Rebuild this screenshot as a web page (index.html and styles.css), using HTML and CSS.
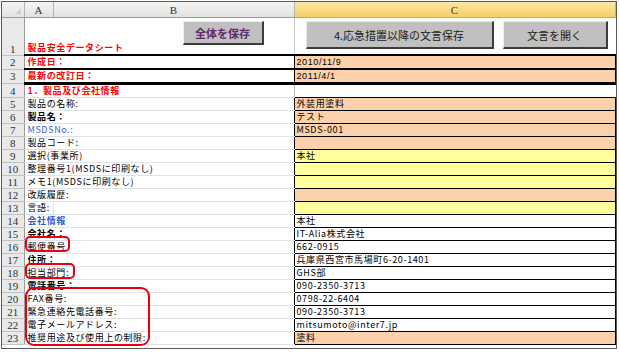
FILE: index.html
```html
<!DOCTYPE html>
<html>
<head>
    <meta charset="utf-8">
    <link rel="stylesheet" href="styles.css">
</head>
<body>
    <div class="frame">
        <table class="sheet">
            <colgroup>
                <col class="w-rn">
                <col class="w-a">
                <col class="w-b">
                <col class="w-c">
            </colgroup>
            <tr class="head">
                <th class="corner"><span class="tri"></span></th>
                <th class="colh">A</th>
                <th class="colh">B</th>
                <th class="colh sel">C</th>
            </tr>
            <tr class="r-top">
                <td class="rn rn-top">1</td>
                <td class="lbl" colspan="2">
                    <div class="top-b">
                        <span class="red">製品安全データシート</span>
                        <span class="btn btn-all">全体を保存</span>
                    </div>
                </td>
                <td class="val top-c">
                    <div class="btns">
                        <span class="btn btn-wide">4.応急措置以降の文言保存</span>
                        <span class="btn btn-open">文言を開く</span>
                    </div>
                </td>
            </tr>
            <tr class="thick">
                <td class="rn">2</td>
                <td class="lbl red" colspan="2">作成日：</td>
                <td class="val box orange small">2010/11/9</td>
            </tr>
            <tr class="thick thick-last">
                <td class="rn">3</td>
                <td class="lbl red" colspan="2">最新の改訂日：</td>
                <td class="val box orange small">2011/4/1</td>
            </tr>
            <tr>
                <td class="rn">4</td>
                <td class="lbl red" colspan="2">1．製品及び会社情報</td>
                <td class="val"></td>
            </tr>
            <tr>
                <td class="rn">5</td>
                <td class="lbl wide" colspan="2">製品の名称:</td>
                <td class="val box orange">外装用塗料</td>
            </tr>
            <tr>
                <td class="rn">6</td>
                <td class="lbl bold" colspan="2">製品名：</td>
                <td class="val box orange">テスト</td>
            </tr>
            <tr>
                <td class="rn">7</td>
                <td class="lbl blue" colspan="2">MSDSNo.:</td>
                <td class="val box orange">MSDS-001</td>
            </tr>
            <tr>
                <td class="rn">8</td>
                <td class="lbl" colspan="2">製品コード:</td>
                <td class="val box orange"></td>
            </tr>
            <tr>
                <td class="rn">9</td>
                <td class="lbl" colspan="2">選択(事業所)</td>
                <td class="val box yellow">本社</td>
            </tr>
            <tr>
                <td class="rn">10</td>
                <td class="lbl" colspan="2">整理番号1(MSDSに印刷なし)</td>
                <td class="val box yellow"></td>
            </tr>
            <tr>
                <td class="rn">11</td>
                <td class="lbl" colspan="2">メモ1(MSDSに印刷なし)</td>
                <td class="val box yellow"></td>
            </tr>
            <tr>
                <td class="rn">12</td>
                <td class="lbl" colspan="2">改版履歴:</td>
                <td class="val box orange"></td>
            </tr>
            <tr>
                <td class="rn">13</td>
                <td class="lbl-a">言語:</td>
                <td class="lbl-b"></td>
                <td class="val box yellow"></td>
            </tr>
            <tr>
                <td class="rn">14</td>
                <td class="lbl blue bold" colspan="2">会社情報</td>
                <td class="val box">本社</td>
            </tr>
            <tr>
                <td class="rn">15</td>
                <td class="lbl bold" colspan="2">会社名：</td>
                <td class="val box">IT-Alia株式会社</td>
            </tr>
            <tr>
                <td class="rn">16</td>
                <td class="lbl" colspan="2">郵便番号</td>
                <td class="val box">662-0915</td>
            </tr>
            <tr>
                <td class="rn">17</td>
                <td class="lbl bold" colspan="2">住所：</td>
                <td class="val box">兵庫県西宮市馬場町6-20-1401</td>
            </tr>
            <tr>
                <td class="rn">18</td>
                <td class="lbl" colspan="2">担当部門:</td>
                <td class="val box">GHS部</td>
            </tr>
            <tr>
                <td class="rn">19</td>
                <td class="lbl bold" colspan="2">電話番号：</td>
                <td class="val box">090-2350-3713</td>
            </tr>
            <tr>
                <td class="rn">20</td>
                <td class="lbl" colspan="2">FAX番号:</td>
                <td class="val box">0798-22-6404</td>
            </tr>
            <tr>
                <td class="rn">21</td>
                <td class="lbl" colspan="2">緊急連絡先電話番号:</td>
                <td class="val box">090-2350-3713</td>
            </tr>
            <tr>
                <td class="rn">22</td>
                <td class="lbl" colspan="2">電子メールアドレス:</td>
                <td class="val box">mitsumoto@inter7.jp</td>
            </tr>
            <tr>
                <td class="rn">23</td>
                <td class="lbl" colspan="2">推奨用途及び使用上の制限:</td>
                <td class="val box orange">塗料</td>
            </tr>
        </table>

        <!-- red marks drawn over the sheet -->
        <div class="mark mark-zip"></div>
        <div class="mark mark-dept"></div>
        <div class="mark mark-contact"></div>
    </div>
</body>
</html>
```

FILE: styles.css
```css
body {
    margin: 0;
    background-color: #fff;
    font-family: "Noto Sans CJK JP", "Liberation Sans", sans-serif;
    color: #000;
}

.frame {
    position: relative;
    width: 614px;
    margin: 1px;
    padding-bottom: 3px;
    border: 1px solid #5a5a5a;
}

.sheet {
    border-collapse: collapse;
    table-layout: fixed;
    width: 613px;
}

.w-rn { width: 22px; }
.w-a { width: 29px; }
.w-b { width: 241px; }
.w-c { width: 321px; }

.sheet th,
.sheet td {
    padding: 0;
    height: 12px;
    font-size: 9px;
    line-height: 12px;
    letter-spacing: 0.6px;
    white-space: nowrap;
    overflow: visible;
    text-align: left;
    vertical-align: middle;
}

/* header row */
.head th {
    height: 15px;
    background: linear-gradient(#f4f4f4, #e2e2e2);
    border-right: 1px solid #b4b4b4;
    border-bottom: 1px solid #9a9a9a;
    font-family: "Liberation Serif", serif;
    font-weight: normal;
    font-size: 11px;
    letter-spacing: 0;
    color: #333;
    text-align: center;
}

.head th.sel {
    background: linear-gradient(#fbe8a6, #f7cf62);
    border-bottom: 1px solid #e0a930;
    color: #444;
}

.corner {
    position: relative;
}

.tri {
    position: absolute;
    right: 3px;
    bottom: 3px;
    width: 0;
    height: 0;
    border-left: 6px solid transparent;
    border-bottom: 6px solid #cfcfcf;
}

/* row numbers */
.rn {
    background-color: #e9e9e9;
    border-right: 1px solid #9a9a9a;
    border-bottom: 1px solid #c2c2c2;
    font-family: "Liberation Serif", serif;
    font-size: 11px !important;
    letter-spacing: 0 !important;
    color: #333;
    text-align: center !important;
}

.rn-top {
    vertical-align: bottom !important;
}

/* labels in A / B */
.lbl,
.lbl-a,
.lbl-b {
    padding-left: 3px !important;
    border-bottom: 1px solid #dfe2e6;
}

.lbl-a {
    border-right: 1px solid #dfe2e6;
}

.lbl-b {
    padding-left: 0 !important;
}

.red {
    color: #f00;
    font-weight: 700;
}

.blue {
    color: #2f5fd8;
}

.bold {
    font-weight: 700;
}

.wide {
    letter-spacing: 2px;
}

/* values in C */
.val {
    padding-left: 2px !important;
    border-left: 1px solid #b8b8b8;
}

.box {
    border: 1px solid #000;
}

.orange {
    background-color: #fbd2ac;
}

.yellow {
    background-color: #ffff9c;
}

.small {
    font-family: "Liberation Sans", sans-serif;
    font-size: 9px !important;
    letter-spacing: 0.6px;
}

.thick td {
    border-top: 2px solid #000;
    border-bottom: 2px solid #000;
}

.thick .rn {
    border-top: 1px solid #c2c2c2;
    border-bottom: 1px solid #c2c2c2;
}

.thick-last td {
    border-bottom: 3px solid #000;
}

.thick-last .rn {
    border-bottom: 1px solid #c2c2c2;
}

.thick .val {
    border-left: 1px solid #000;
    border-right: 1px solid #000;
}

/* first row with the buttons */
.r-top td {
    height: 36px;
}

.top-b {
    display: flex;
    justify-content: space-between;
    height: 36px;
    padding-right: 30px;
}

.top-b .red {
    align-self: flex-end;
    line-height: 13px;
}

.top-c {
    vertical-align: top !important;
    border-left: 1px solid #c8c8c8;
}

.btns {
    display: flex;
    gap: 9px;
    padding-top: 3px;
    padding-left: 9px;
}

.btn {
    display: flex;
    align-items: center;
    justify-content: center;
    box-sizing: border-box;
    background-color: #c0c0c0;
    border-top: 1px solid #ececec;
    border-left: 1px solid #ececec;
    border-right: 2px solid #3c3c3c;
    border-bottom: 2px solid #3c3c3c;
    font-size: 11px;
    line-height: 14px;
    letter-spacing: 0;
    color: #222;
    font-weight: normal;
}

.btn-all {
    align-self: flex-start;
    margin-top: 3px;
    width: 81px;
    height: 24px;
    color: #5e2a6c;
    font-weight: 700;
}

.btn-wide {
    width: 188px;
    height: 28px;
}

.btn-open {
    width: 105px;
    height: 28px;
}

/* red annotation marks */
.mark {
    position: absolute;
    border: 2px solid #e60012;
    border-radius: 5px;
}

.mark-zip {
    left: 23px;
    top: 234px;
    width: 41px;
    height: 12px;
}

.mark-dept {
    left: 23px;
    top: 261px;
    width: 46px;
    height: 12px;
}

.mark-contact {
    left: 23px;
    top: 285px;
    width: 121px;
    height: 55px;
    border-radius: 9px;
}
```
